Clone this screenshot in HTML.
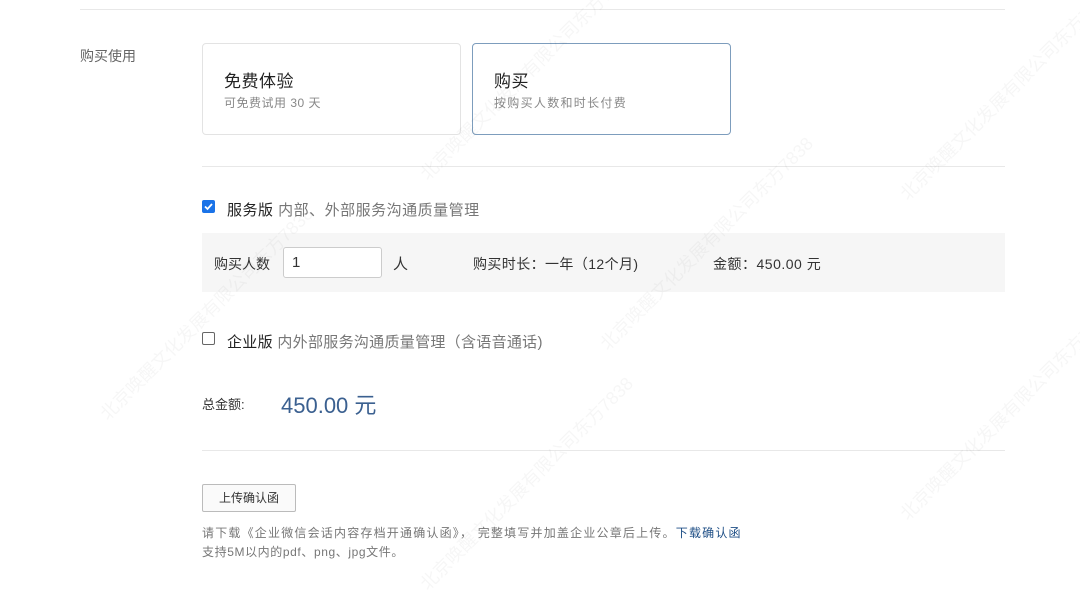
<!DOCTYPE html>
<html><head><meta charset="utf-8"><style>
*{margin:0;padding:0;box-sizing:border-box}
body{width:1080px;height:576px;background:#fff;font-family:"Liberation Sans","Noto Sans CJK SC",sans-serif;color:#333;position:relative;overflow:hidden}
.a{position:absolute;white-space:nowrap}
.hr{position:absolute;height:1px;background:#e8e8e8}
.card{position:absolute;border:1px solid #e3e3e3;border-radius:4px;background:#fff}
.cb{position:absolute;width:13px;height:13px;border-radius:2px}
.wm{position:absolute;color:rgba(0,0,0,0.035);font-size:18px;transform:rotate(-45deg);white-space:nowrap}
</style></head><body>
<div class="hr" style="left:80px;top:9px;width:925px"></div>
<div class="a" style="left:80px;top:46px;font-size:14px;color:#666">购买使用</div>
<div class="card" style="left:202px;top:43px;width:259px;height:92px"></div>
<div class="a" style="left:224px;top:67px;font-size:17px;color:#222;letter-spacing:0.5px">免费体验</div>
<div class="a" style="left:224px;top:94px;font-size:12px;color:#888;letter-spacing:0.5px">可免费试用 30 天</div>
<div class="card" style="left:472px;top:43px;width:259px;height:92px;border-color:#7d9dbd"></div>
<div class="a" style="left:494px;top:67px;font-size:17px;color:#222;letter-spacing:0.5px">购买</div>
<div class="a" style="left:494px;top:94px;font-size:12px;color:#888;letter-spacing:1.3px">按购买人数和时长付费</div>
<div class="hr" style="left:202px;top:166px;width:803px"></div>
<div class="cb" style="left:202px;top:200px;background:#1a73e8"><svg width="13" height="13"><path d="M3 6.5l2.5 2.5 4.5-5" stroke="#fff" stroke-width="1.8" fill="none"/></svg></div>
<div class="a" style="left:227px;top:199px;font-size:15px;color:#222;letter-spacing:0.5px">服务版 <span style="color:#777">内部、外部服务沟通质量管理</span></div>
<div style="position:absolute;left:202px;top:233px;width:803px;height:59px;background:#f6f6f6"></div>
<div class="a" style="left:214px;top:254px;font-size:14px;color:#333">购买人数</div>
<div style="position:absolute;left:283px;top:247px;width:99px;height:31px;border:1px solid #ccc;border-radius:3px;background:#fff;font-size:15px;padding:6px 8px">1</div>
<div class="a" style="left:393px;top:253px;font-size:15px">人</div>
<div class="a" style="left:473px;top:254px;font-size:14px;letter-spacing:0.4px">购买时长：一年（12个月)</div>
<div class="a" style="left:713px;top:254px;font-size:14px;letter-spacing:0.5px">金额：450.00 元</div>
<div class="cb" style="left:202px;top:332px;border:1px solid #666;background:#fff"></div>
<div class="a" style="left:227px;top:331px;font-size:15px;color:#222;letter-spacing:0.3px">企业版 <span style="color:#777">内外部服务沟通质量管理（含语音通话)</span></div>
<div class="a" style="left:202px;top:394px;font-size:13px;color:#333">总金额:</div>
<div class="a" style="left:281px;top:388px;font-size:22px;color:#3b6090">450.00 元</div>
<div class="hr" style="left:202px;top:450px;width:803px"></div>
<div style="position:absolute;left:202px;top:484px;width:94px;height:28px;border:1px solid #bbb;border-radius:2px;background:#fafafa;font-size:12px;text-align:center;line-height:26px">上传确认函</div>
<div class="a" style="left:202px;top:524px;font-size:12px;color:#777;letter-spacing:1.2px">请下载《企业微信会话内容存档开通确认函》， 完整填写并加盖企业公章后上传。<span style="color:#1f4f86">下载确认函</span></div>
<div class="a" style="left:202px;top:543px;font-size:12px;color:#777;letter-spacing:0.6px">支持5M以内的pdf、png、jpg文件。</div>
<div class="wm" style="left:380px;top:60px">北京唤醒文化发展有限公司东方7838</div>
<div class="wm" style="left:860px;top:80px">北京唤醒文化发展有限公司东方7838</div>
<div class="wm" style="left:60px;top:300px">北京唤醒文化发展有限公司东方7838</div>
<div class="wm" style="left:560px;top:230px">北京唤醒文化发展有限公司东方7838</div>
<div class="wm" style="left:380px;top:470px">北京唤醒文化发展有限公司东方7838</div>
<div class="wm" style="left:860px;top:400px">北京唤醒文化发展有限公司东方7838</div>
</body></html>
